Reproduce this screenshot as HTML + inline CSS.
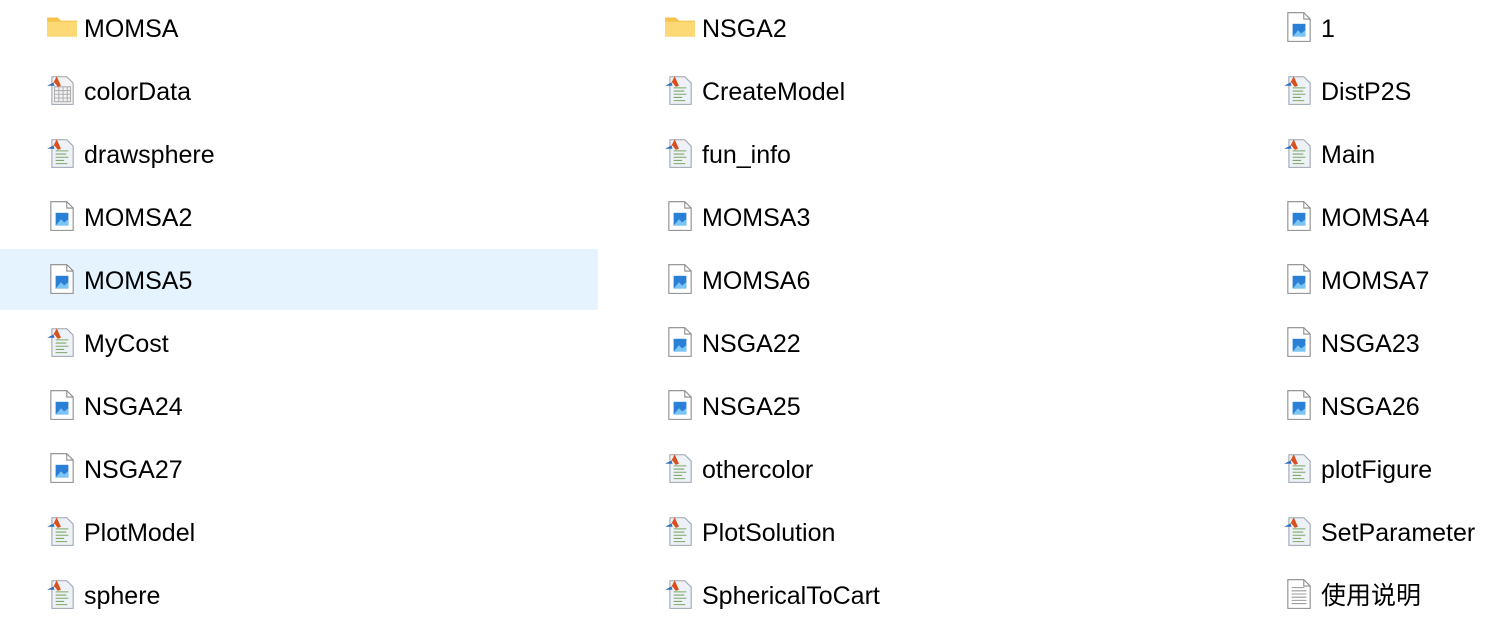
<!DOCTYPE html>
<html><head><meta charset="utf-8"><style>
body{margin:0;width:1492px;height:644px;background:#fff;overflow:hidden;position:relative;font-family:"Liberation Sans","Noto Sans CJK SC",sans-serif;}
.it{position:absolute;height:62px;font-size:25px;color:#000;}
.it svg{position:absolute;top:13px;}
.it span{position:absolute;white-space:nowrap;top:19px;line-height:26px;}
.hl{position:absolute;left:0;top:249px;width:598px;height:61px;background:#e5f3fe;}
</style></head><body>
<svg width="0" height="0" style="position:absolute">
<defs>
<symbol id="fold" viewBox="0 0 30 30"><path d="M1 6h10l3 3h15v15H1z" fill="#f5c24d"/><path d="M1 10h28v14H1z" fill="#fcd975"/></symbol>
<symbol id="page" viewBox="0 0 30 30"><path d="M4.5 1.5h15l6 6v21h-21z" fill="#fff" stroke="#8a8a8a"/><path d="M19.5 1.5v6h6" fill="none" stroke="#8a8a8a"/></symbol>
<symbol id="img" viewBox="0 0 30 30"><use href="#page"/><rect x="9" y="12" width="12" height="12" fill="#2a7fd6"/><path d="M9 24l5-6 3 3 4-3v6z" fill="#7cc4f4"/></symbol>
<symbol id="mat" viewBox="0 0 30 30"><path d="M5.5 2.5h14l6 6v20h-20z" fill="#eef2f6" stroke="#9aa4b0"/><path d="M9 13h12M9 16h10M9 19h12M9 22h8M9 25h11" stroke="#7aa86a" stroke-width="1"/><path d="M1 11l6-3 3-6 4 9-3 1-3-4z" fill="#d9501f"/><path d="M1 11l6-3 1 3z" fill="#2c6fc0"/></symbol>
<symbol id="dat" viewBox="0 0 30 30"><path d="M5.5 2.5h14l6 6v20h-20z" fill="#f3f3f3" stroke="#9aa4b0"/><path d="M8 12h15v14H8zM8 15.5h15M8 19h15M8 22.5h15M12 12v14M16 12v14M20 12v14" fill="none" stroke="#b0b0b0"/><path d="M1 11l6-3 3-6 4 9-3 1-3-4z" fill="#d9501f"/><path d="M1 11l6-3 1 3z" fill="#2c6fc0"/></symbol>
<symbol id="txt" viewBox="0 0 30 30"><use href="#page"/><path d="M8 9h12M8 12h14M8 15h14M8 18h14M8 21h14M8 24h14" stroke="#9a9a9a"/></symbol>
</defs></svg>
<div class="hl"></div>
<script>
const cols=[48,666,1285];
const items=[
["fold","MOMSA"],["fold","NSGA2"],["img","1"],
["dat","colorData"],["mat","CreateModel"],["mat","DistP2S"],
["mat","drawsphere"],["mat","fun_info"],["mat","Main"],
["img","MOMSA2"],["img","MOMSA3"],["img","MOMSA4"],
["img","MOMSA5"],["img","MOMSA6"],["img","MOMSA7"],
["mat","MyCost"],["img","NSGA22"],["img","NSGA23"],
["img","NSGA24"],["img","NSGA25"],["img","NSGA26"],
["img","NSGA27"],["mat","othercolor"],["mat","plotFigure"],
["mat","PlotModel"],["mat","PlotSolution"],["mat","SetParameter"],
["mat","sphere"],["mat","SphericalToCart"],["txt","使用说明"]];
let h="";
items.forEach((it,i)=>{const r=Math.floor(i/3),c=i%3;const x=cols[c],y=-3+63*r;
h+=`<div class="it" style="left:${x}px;top:${y}px"><svg width="32" height="34" viewBox="0 0 30 32" style="left:-2px"><use href="#${it[0]}" width="30" height="32"/></svg><span style="left:${36}px">${it[1]}</span></div>`;});
document.write(h);
</script>
</body></html>
